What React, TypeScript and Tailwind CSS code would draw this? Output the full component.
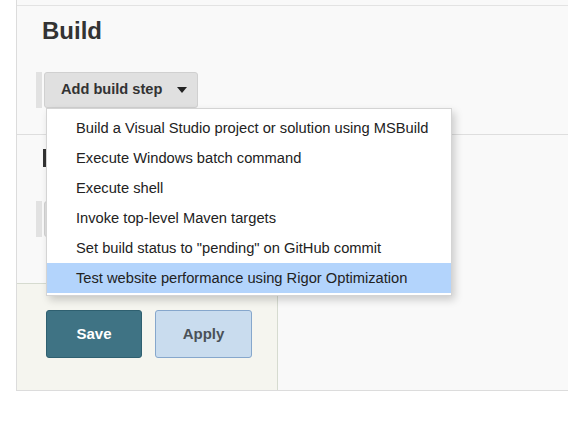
const steps = [
  "Build a Visual Studio project or solution using MSBuild",
  "Execute Windows batch command",
  "Execute shell",
  "Invoke top-level Maven targets",
  'Set build status to "pending" on GitHub commit',
  "Test website performance using Rigor Optimization",
];

function StepButton({ label }: { label?: string }) {
  return (
    <div className="flex items-stretch pl-[19px]">
      <div className="w-[6px] bg-[#e2e2e2]" />
      <button className="ml-[2px] flex h-[36px] w-[154px] items-center rounded-[3px] border border-[#d0d0d0] bg-[#e0e0e0] pl-[16px] text-[14.6px] font-bold text-[#333]">
        {label}
        {label && (
          <svg width="10" height="6" viewBox="0 0 10 6" className="ml-[15px]">
            <polygon points="0,0 10,0 5,6" fill="#222" />
          </svg>
        )}
      </button>
    </div>
  );
}

export default function App() {
  return (
    <div
      className="relative h-[429px] w-[568px] overflow-hidden bg-white"
      style={{ fontFamily: '"Liberation Sans", Arial, sans-serif' }}
    >
      <div className="ml-[16px] flex h-[391px] w-[552px] flex-col border-b border-l border-[#dcdcdc] bg-[#f9f9f9]">
        <div className="h-[6px] border-b border-[#e3e3e3]" />
        <h2 className="mt-[11px] pl-[25px] text-[24px] font-bold leading-[28px] text-[#333]">Build</h2>
        <div className="mt-[27px]">
          <StepButton label="Add build step" />
        </div>
        <div className="mt-[26px] border-t border-[#dedede]" />
        {/* Post-build heading, mostly covered by the menu */}
        <div className="ml-[26px] mt-[14px] h-[18px] w-[3px] bg-[#333]" />
        <div className="mt-[34px]">
          <StepButton />
        </div>
        <div className="mt-[46px] flex w-[261px] flex-1 gap-[13px] border-r border-t border-[#d6dbd0] bg-[#f5f5ef] pl-[29px] pt-[26px]">
          <button className="h-[48px] w-[96px] rounded-[3px] border border-[#2f6070] bg-[#3f7384] text-[15px] font-bold text-white">
            Save
          </button>
          <button className="h-[48px] w-[97px] rounded-[3px] border border-[#86a7cc] bg-[#c9dcee] text-[15px] font-bold text-[#4a5157]">
            Apply
          </button>
        </div>
      </div>

      <ul className="absolute left-[46px] top-[108px] w-[406px] border border-[#d4d4d4] bg-white pb-[2px] pt-[4px] shadow-[3px_4px_8px_rgba(0,0,0,0.18)]">
        {steps.map((s, i) => (
          <li
            key={s}
            className={`flex h-[30px] items-center pl-[29px] text-[14.7px] text-[#222] ${
              i === steps.length - 1 ? "bg-[#b3d4fc]" : ""
            }`}
          >
            {s}
          </li>
        ))}
      </ul>
    </div>
  );
}
